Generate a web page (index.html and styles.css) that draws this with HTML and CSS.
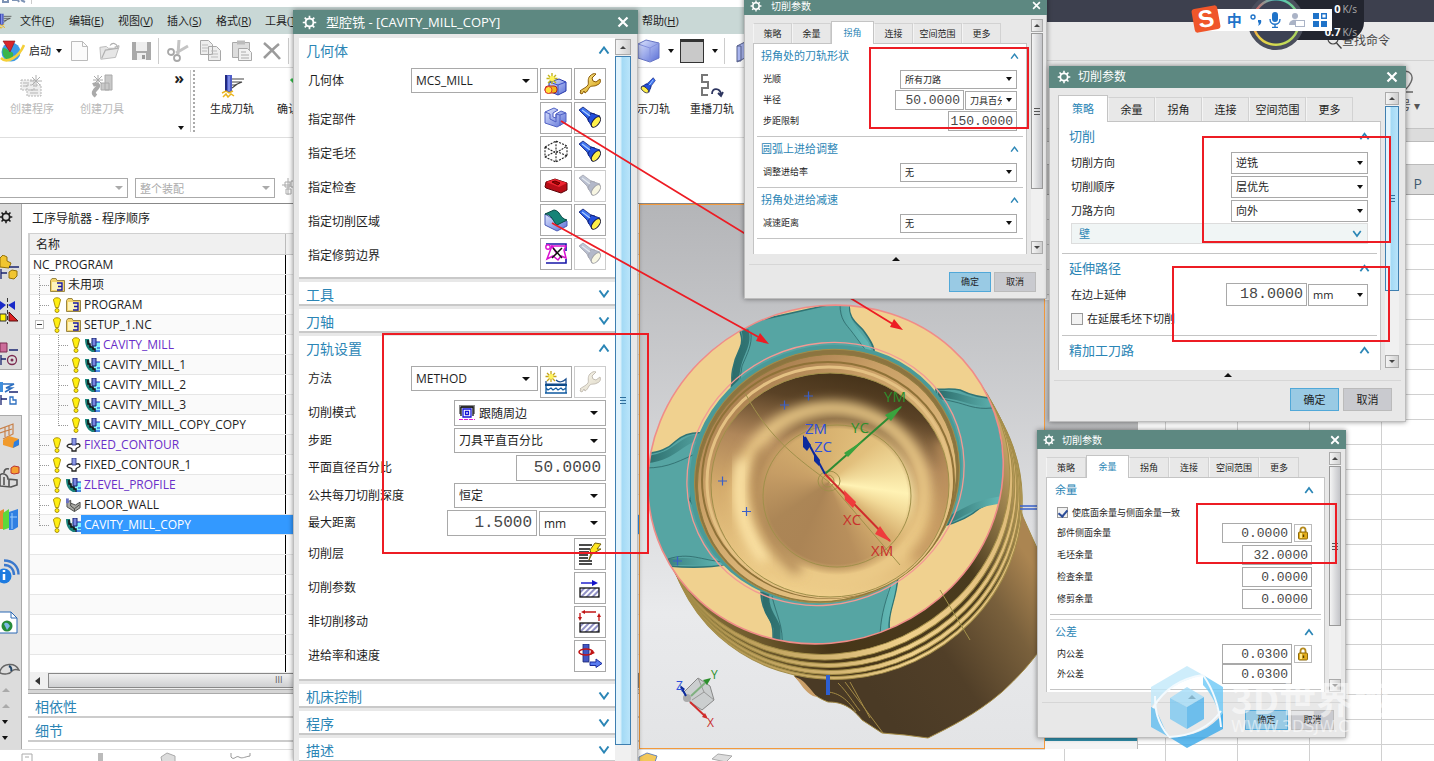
FILE: index.html
```html
<!DOCTYPE html>
<html lang="zh-CN">
<head>
<meta charset="utf-8">
<title>NX CAM</title>
<link rel="stylesheet" href="styles.css">
</head>
<body>
<svg class="defs" aria-hidden="true">
  <defs>
    <linearGradient id="blueBox" x1="0" y1="0" x2="1" y2="1"><stop offset="0" stop-color="#dfe6ff"/><stop offset="1" stop-color="#5a6fd6"/></linearGradient>
    <linearGradient id="torch" x1="0" y1="1" x2="1" y2="0"><stop offset="0" stop-color="#0a1f9c"/><stop offset=".5" stop-color="#2f66ee"/><stop offset="1" stop-color="#9cc6ff"/></linearGradient>
    <linearGradient id="gold" x1="0" y1="0" x2="1" y2="1"><stop offset="0" stop-color="#fff2a0"/><stop offset="1" stop-color="#d39a08"/></linearGradient>
    <pattern id="hatch" width="4" height="4" patternUnits="userSpaceOnUse" patternTransform="rotate(45)"><path d="M1 0v4" stroke="#22228c" stroke-width="1"/></pattern>
    <symbol id="gear" viewBox="0 0 16 16"><circle cx="8" cy="8" r="4.200" fill="none" stroke="currentColor" stroke-width="2"/><path d="M8 .8v3M8 12.200v3M.8 8h3M12.200 8h3M2.900 2.900l2.100 2.100M11 11l2.100 2.100M2.900 13.100L5 11M11 5l2.100-2.100" stroke="currentColor" stroke-width="1.800"/></symbol>
    <symbol id="close" viewBox="0 0 12 12"><path d="M1.500 1.500l9 9M10.500 1.500l-9 9" stroke="currentColor" stroke-width="2.200"/></symbol>
    <symbol id="up" viewBox="0 0 12 8"><path d="M1.500 7.500L6 1.500l4.500 6" fill="none" stroke="#2b86b6" stroke-width="2"/></symbol>
    <symbol id="down" viewBox="0 0 12 8"><path d="M1.500 .5L6 6.500l4.500-6" fill="none" stroke="#2b86b6" stroke-width="2"/></symbol>
    <symbol id="flash" viewBox="0 0 24 24"><path d="M1 4l4-3 8 6 4 1-6 8-2-4z" fill="url(#torch)" stroke="#0a1a70" stroke-width=".8"/><path d="M13 7l9 3-8 11-4-7z" fill="#2450dd" stroke="#0a1a70" stroke-width=".8"/><path d="M4 4l8 6" stroke="#a9ccff" stroke-width="1.400"/><ellipse cx="18" cy="16" rx="3.200" ry="6.200" transform="rotate(38 18 16)" fill="#fff04a" stroke="#113" stroke-width="1"/></symbol>
    <symbol id="wrench" viewBox="0 0 24 24"><path d="M2 19c2-2 6-3 8-6 1-2-1-6 2-9 2-2 4-3 6-2l-4 4 1 3 3 1 4-3c1 3 0 5-3 6-3 2-6 0-8 3-1 2-2 4-4 5l-1-2-2 3-2-1 1-2z" fill="url(#gold)" stroke="#8a5a06" stroke-width="1"/></symbol>
    <symbol id="excl" viewBox="0 0 10 16"><path d="M1.500 3C1.500 0 8.500 0 8.500 3L6.500 10.500h-3z" fill="#ffee10" stroke="#a58a00" stroke-width=".9"/><circle cx="5" cy="13.500" r="2" fill="#ffee10" stroke="#a58a00" stroke-width=".9"/></symbol>
    <symbol id="folder" viewBox="0 0 15 14"><path d="M.5 2.500l1.500-2h4l1 2h7.500v11H.5z" fill="#f3d36b" stroke="#9a8743"/><path d="M2 4h11v8H2z" fill="#fdf3bd"/><path d="M7 5h5v7H7M8 8.500h4" fill="none" stroke="#1a1aa0" stroke-width="1.400"/></symbol>
    <symbol id="cavity" viewBox="0 0 15 14"><path d="M6 4h9v10H9z" fill="#7ff4ff"/><path d="M0 1h4l1 6 4 3v4H7C2 12 0 7 0 1z" fill="#188078"/><path d="M3 2v4h2v3h3v2h2v3" fill="none" stroke="#111" stroke-width="1.500"/><path d="M7 0h4v8H7z" fill="#7785e0" stroke="#16206c" stroke-width="1"/><path d="M11 4h4M12 10h3M10 13h5" stroke="#1720c0"/></symbol>
    <symbol id="contour" viewBox="0 0 15 14"><path d="M1 8c2-3 3-1 4-2h6c2-1 3 1 3 2-1 2-3 1-4 3v2H6v-2c-1-2-5-1-5-3z" fill="#fff" stroke="#222" stroke-width="1.300"/><path d="M6 0h4v7H6z" fill="#8b98e6" stroke="#26307c" stroke-width=".8"/></symbol>
    <symbol id="floor" viewBox="0 0 16 14"><path d="M1 4l4-2v3l5 2 5-3v6l-6 4-8-5z" fill="#a9a9a4" stroke="#4a4a48"/><path d="M5 5v3l4 3 5-4M9 11v3" fill="none" stroke="#4a4a48"/><path d="M0 0h3v5H0z" fill="#6a72c4"/></symbol>
    <symbol id="lock" viewBox="0 0 12 14"><path d="M3.500 7V4c0-3.500 5-3.500 5 0v3" fill="none" stroke="#b58a1c" stroke-width="1.800"/><rect x="1.500" y="6" width="9" height="7" rx="1" fill="#e2ad1c" stroke="#8d6a0c"/><path d="M3 7h2v5H3z" fill="#ffe98a"/><path d="M6.500 8.500v2.500" stroke="#533c02" stroke-width="1.400"/></symbol>
    <symbol id="tool" viewBox="0 0 24 24"><path d="M5 1h7v17H5z" fill="#4f5ec9"/><path d="M5 1h2v17H5z" fill="#222a80"/><path d="M9 2v15" stroke="#aab6ff"/><path d="M12 5h12M12 8h10l-7 3M12 11h4l-4 3" fill="none" stroke="#444" stroke-width="1.100"/><path d="M2 19l4-2 3 2 4-2M3 23l3-3 2 3 3-3 3 2" fill="none" stroke="#eab520" stroke-width="1.500"/></symbol>
  </defs>
</svg>

<main class="desktop">
  <!-- spreadsheet behind -->
  <section class="sheet">
    <div class="sheet-top"></div>
    <div class="sheet-tabs"><svg width="16" height="16" viewBox="0 0 16 16"><circle cx="7" cy="6" r="5" fill="none" stroke="#444" stroke-width="1.200"/><path d="M10.500 10l5 5.500" stroke="#444" stroke-width="1.400"/></svg><span>查找命令</span></div>
    <div class="sheet-ribbon"><div class="ribbon-item"><svg width="14" height="26" viewBox="0 0 14 26"><path d="M0 2c8-3 12 4 9 10-2 5-5 7-8 10h10" fill="none" stroke="#666" stroke-width="1.400"/></svg><span>号 ▾</span></div></div>
    <div class="sheet-gap"></div>
    <div class="sheet-formula"></div>
    <div class="sheet-head">P</div>
    <div class="sheet-grid"></div>
  </section>
  <section class="back-window"></section>

  <!-- NX main window -->
  <section class="nx">
    <div class="nx-cap"><svg width="60" height="4" viewBox="0 0 60 4"><path d="M3 0v2h5V0M12 0h6l1 2M21 0l4 2" fill="none" stroke="#7d93b5" stroke-width="2"/><path d="M31.500 0v4" stroke="#ccc"/></svg></div>
    <nav class="menubar">
      <div class="bar-left"><svg width="14" height="16" viewBox="8 0 18 24"><use href="#tool" width="24" height="24"/></svg><a href="#">文件(<u>F</u>)</a><a href="#">编辑(<u>E</u>)</a><a href="#">视图(<u>V</u>)</a><a href="#">插入(<u>S</u>)</a><a href="#">格式(<u>R</u>)</a><a href="#">工具(<u>T</u>)</a></div>
      <div class="bar-right"><a href="#">帮助(<u>H</u>)</a></div>
    </nav>
    <div class="toolbar">
      <div class="bar-left tb1">
        <svg width="25" height="24" viewBox="0 0 25 24"><circle cx="11" cy="13" r="9.500" fill="#3c9be8"/><path d="M3 9c5 0 5 4 9 4 3 2 0 7-2 9-5-1-9-7-7-13z" fill="#3bb54a"/><path d="M1 19c6 6 18-1 23-13" fill="none" stroke="#f4cf3a" stroke-width="2.600"/><path d="M3 2l12 0-5 11z" fill="#d8262c" stroke="#8c1015" stroke-width=".6"/></svg>
        <span class="launch">启动</span><i class="caret"></i>
        <svg class="ic" width="17" height="20" viewBox="0 0 17 20"><path d="M.5.5h11l5 5v14H.5z" fill="#fbfbfb" stroke="#bbb"/><path d="M11.500.5v5h5" fill="none" stroke="#bbb"/></svg>
        <svg class="ic" width="22" height="20" viewBox="0 0 24 20"><path d="M1 6l7-1 2 2h9l3-2-4 12-16 2z" fill="#e6e6e6" stroke="#b8b8b8"/><path d="M3 18L7 9l14-2M12 4c3-4 7-2 8 1l2-1M20 5l-3 1" fill="none" stroke="#b0b0b0" stroke-width="1.300"/></svg>
        <svg class="ic" width="19" height="18" viewBox="0 0 19 18"><path d="M0 0h19v18H0z" fill="#a9a9a9"/><path d="M4 0h11v9H4zM5 11h9v7H5z" fill="#eee"/><path d="M10 13h3v4h-3z" fill="#999"/></svg>
        <i class="sep"></i>
        <svg class="ic" width="22" height="22" viewBox="0 0 22 22"><path d="M12 0l-1 14M21 6L9 13" stroke="#c4c4c4" stroke-width="3"/><circle cx="4" cy="12" r="3" fill="none" stroke="#a8a8a8" stroke-width="1.800"/><circle cx="10" cy="18" r="3" fill="none" stroke="#a8a8a8" stroke-width="1.800"/></svg>
        <svg class="ic" width="21" height="21" viewBox="0 0 21 21"><path d="M.5.5h8l4 4v10H.5zM8.500 6.500h8l4 4v10h-12z" fill="#eee" stroke="#a8a8a8"/><path d="M2 5h6M2 8h6M2 11h5M11 11h6M11 14h7M11 17h7" stroke="#bbb"/></svg>
        <svg class="ic" width="20" height="21" viewBox="0 0 20 21"><path d="M.5 2.500h17v15H.5z" fill="#ddd" stroke="#aaa"/><path d="M5 .5h8v4H5z" fill="#bbb"/><path d="M6.500 8.500h9l4 4v8h-13z" fill="#f2f2f2" stroke="#a8a8a8"/><path d="M9 12h5M9 15h8M9 18h8" stroke="#aaa"/></svg>
        <svg class="ic" width="18" height="18" viewBox="0 0 18 18"><path d="M1 1c5 4 11 10 16 16M16 2C11 6 6 11 1 16" stroke="#9b9b9b" stroke-width="2.600" fill="none"/></svg>
        <i class="sep"></i>
      </div>
      <div class="bar-right tb1r">
        <svg width="22" height="24" viewBox="0 0 22 24"><path d="M0 5l8-4 13 3v15l-9 4L0 19z" fill="url(#blueBox)" stroke="#6674c4"/><path d="M0 5l12 4 9-5M12 9v14" fill="none" stroke="#8390dd"/></svg><i class="caret"></i><i class="swatch"></i><i class="caret"></i><i class="sep"></i>
        <svg width="18" height="24" viewBox="0 0 18 24"><path d="M2 7l12-6v16L2 23zM2 7h4v15H2M14 13h4" fill="#aab6f0" stroke="#56608c"/></svg>
      </div>
    </div>
    <div class="toolbar tall">
      <div class="bar-left tb2">
        <div class="tool off"><svg width="24" height="24" viewBox="0 0 24 24"><path d="M1 6h13v10H1zM7 11h14v11H7z" fill="#eee" stroke="#b5b5b5" stroke-dasharray="2 1"/><path d="M10 16h8M10 19h8M3 9h6M3 12h4" stroke="#b5b5b5"/><path d="M16 1v12M10 7h12M12 3l8 8M20 3l-8 8" stroke="#b0b0b0"/></svg><span>创建程序</span></div>
        <div class="tool off"><svg width="24" height="24" viewBox="0 0 24 24"><path d="M15 1h7v15h-7zM11 9h8v7h-8z" fill="#c9c9c9" stroke="#aaa"/><path d="M3 11c4-2 7 0 4 3s-5 5-1 8" fill="none" stroke="#aaa" stroke-width="4"/><path d="M8 1v10M3 6h10M4 2l8 8M12 2L4 10" stroke="#aaa"/></svg><span>创建刀具</span></div>
        <div class="more"><b>»</b><i class="caret"></i></div>
        <i class="grip"></i>
        <div class="tool gen"><svg width="24" height="24"><use href="#tool"/></svg><span>生成刀轨</span></div>
        <div class="tool"><svg width="24" height="24" viewBox="0 0 24 24"><path d="M4 5l4 4 9-8" stroke="#35c04b" stroke-width="3" fill="none"/></svg><span>确认刀轨</span></div>
      </div>
      <div class="bar-right tb2r">
        <div class="tool"><svg width="24" height="24" viewBox="0 0 24 24"><g transform="translate(20 3) rotate(90) scale(.7)"><use href="#flash" width="24" height="24"/></g></svg><span>显示刀轨</span></div>
        <div class="tool"><svg width="24" height="24" viewBox="0 0 24 24"><path d="M8 1H2v7h6v6H2v7h6" fill="none" stroke="#777" stroke-width="2"/><path d="M12 20c0-7 8-6 9 0m-3-1l3 3 2-4" fill="none" stroke="#2e3660" stroke-width="1.800"/></svg><span>重播刀轨</span></div>
      </div>
    </div>
    <div class="selbar">
      <label class="drop off"><select aria-label="过滤器"><option></option></select></label>
      <label class="drop off"><select aria-label="选择范围"><option>整个装配</option></select></label>
      <svg width="18" height="18" viewBox="0 0 18 18"><path d="M3 4h5v5H3zM9 3h6v6H9zM4 11h5v5H4zM6 0v17M0 7h8" fill="none" stroke="#aaa"/></svg>
    </div>
    <div class="work">
      <aside class="rail">
        <div class="rail-a">
          <svg width="14" height="14"><use href="#gear"/></svg>
          <svg width="20" height="26" viewBox="0 0 20 26"><path d="M0 3l3-3 4 2v4l4 2-2 5-9-1z" fill="#f1c531" stroke="#92700a"/><path d="M9 17l3-2 5 1v5l-3 3-5-1z" fill="#f1c531" stroke="#92700a"/><path d="M1 14v10M1 18h6M9 12h10" stroke="#1a2470" stroke-width="1.300"/></svg>
          <svg width="20" height="26" viewBox="0 0 20 26"><path d="M0 3l6 4-6 5zM15 3L8 7l7 5z" fill="#1a2ac8"/><path d="M0 16h6v7H0z" fill="#fff200" stroke="#333"/><path d="M9 14l9 9H9z" fill="#d22" stroke="#511"/><path d="M7.500 0v26" stroke="#333" stroke-dasharray="4 2"/></svg>
          <svg width="20" height="26" viewBox="0 0 20 26"><path d="M0 2h7v9H0z" fill="#cc6c9a" stroke="#7c2a50"/><circle cx="12" cy="19" r="4.500" fill="none" stroke="#7c2a50" stroke-width="1.300"/><circle cx="12" cy="19" r="1.500" fill="#7c2a50"/><path d="M1 14v10M1 18h5M9 9h9" stroke="#1a2470" stroke-width="1.300"/></svg>
        </div>
        <div class="rail-now"><svg width="20" height="26" viewBox="0 0 20 26"><path d="M0 2h3v10H0z" fill="#3f8edc"/><path d="M3 4h11L6 8h6l-7 4" fill="none" stroke="#2d6fc0" stroke-width="1.500"/><path d="M1 15v10M1 19h6M9 12h9" stroke="#1a2470" stroke-width="1.300"/><path d="M10 17v7h6v-4h-3v-3z" fill="none" stroke="#2d6fc0" stroke-width="1.300"/></svg></div>
        <div class="rail-b">
          <svg width="20" height="26" viewBox="0 0 20 26"><path d="M0 6L13 1v10L3 16M0 10l12-4M5 4v10M9 3v9" fill="none" stroke="#c8814a" stroke-width="1.200"/><path d="M3 17l6-4 10 3v6l-6 3-10-3z" fill="#f09a2c"/><path d="M14 19l5-3v6l-6 3z" fill="#2d7fe0"/></svg>
          <svg width="20" height="26" viewBox="0 0 20 26"><path d="M11 3l3-2 5 1v6l-5 1-3-1z" fill="#f5a030" stroke="#b33"/><path d="M9 4c-4-1-5 2-5 4M0 10c3-3 8 0 8 4l9 1v5l-6 2-11-1zM4 12v8M9 15v7" fill="none" stroke="#555" stroke-width="1.600"/></svg>
          <svg width="20" height="26" viewBox="0 0 20 26"><path d="M0 4l4-2v20H0z" fill="#e58a30"/><path d="M3 6l6-4v19l-6 2z" fill="#5cd83a"/><path d="M9 5l9-3v18l-5 3H9z" fill="#2f7fe2"/><path d="M12 6v16M10 10h7" stroke="#9fd0ff"/></svg>
          <svg width="20" height="26" viewBox="0 0 20 26"><circle cx="4" cy="17" r="7.500" fill="#1d7be0"/><path d="M4 15v6M4 11v2" stroke="#fff" stroke-width="2.500"/><path d="M4 6c6 0 10 4 10 10M4 1.500c9 0 14.500 6 14.500 14" fill="none" stroke="#3a78cc" stroke-width="2.400"/></svg>
          <svg width="20" height="26" viewBox="0 0 20 26"><path d="M-2 1h13l6 6v15H-2z" fill="#fff" stroke="#2a68b4"/><path d="M11 1v6h6" fill="none" stroke="#2a68b4"/><circle cx="7" cy="15" r="5.500" fill="#278b3a"/><path d="M4 13c2-3 5 0 6 2l-3 4z" fill="#7fb9e8"/></svg>
          <svg width="20" height="14" viewBox="0 0 20 14"><path d="M0 8c3-8 15-9 19-1-3-1-5-1-7 1-2 3-8 4-12 2z" fill="#ddd" stroke="#666" stroke-width="1.400"/><path d="M9 3c2 1 3 3 2 5" stroke="#246" stroke-width="2" fill="none"/></svg>
          <div class="rail-ar"><i class="c-up"></i><i class="c-up"></i><i class="caret"></i><i class="caret bar"></i></div>
        </div>
      </aside>
      <section class="navigator">
        <h2>工序导航器 - 程序顺序</h2>
        <div class="tree">
          <div class="tree-head"><span>名称</span><span></span></div>
          <ul>
            <li class="root">NC_PROGRAM</li>
            <li><i class="g h first"></i><svg class="fi" width="15" height="14"><use href="#folder"/></svg>未用项</li>
            <li><i class="g h"></i><svg class="ex" width="10" height="16"><use href="#excl"/></svg><svg class="fi" width="15" height="14"><use href="#folder"/></svg>PROGRAM</li>
            <li><button class="fold" aria-label="折叠"></button><svg class="ex" width="10" height="16"><use href="#excl"/></svg><svg class="fi" width="15" height="14"><use href="#folder"/></svg>SETUP_1.NC</li>
            <li class="vis"><i class="g"></i><i class="g h"></i><svg class="ex" width="10" height="16"><use href="#excl"/></svg><svg class="fi" width="15" height="14"><use href="#cavity"/></svg>CAVITY_MILL</li>
            <li><i class="g"></i><i class="g h"></i><svg class="ex" width="10" height="16"><use href="#excl"/></svg><svg class="fi" width="15" height="14"><use href="#cavity"/></svg>CAVITY_MILL_1</li>
            <li><i class="g"></i><i class="g h"></i><svg class="ex" width="10" height="16"><use href="#excl"/></svg><svg class="fi" width="15" height="14"><use href="#cavity"/></svg>CAVITY_MILL_2</li>
            <li><i class="g"></i><i class="g h"></i><svg class="ex" width="10" height="16"><use href="#excl"/></svg><svg class="fi" width="15" height="14"><use href="#cavity"/></svg>CAVITY_MILL_3</li>
            <li><i class="g"></i><i class="g h last"></i><svg class="ex" width="10" height="16"><use href="#excl"/></svg><svg class="fi" width="15" height="14"><use href="#cavity"/></svg>CAVITY_MILL_COPY_COPY</li>
            <li class="vis"><i class="g h"></i><svg class="ex" width="10" height="16"><use href="#excl"/></svg><svg class="fi" width="15" height="14"><use href="#contour"/></svg>FIXED_CONTOUR</li>
            <li><i class="g h"></i><svg class="ex" width="10" height="16"><use href="#excl"/></svg><svg class="fi" width="15" height="14"><use href="#contour"/></svg>FIXED_CONTOUR_1</li>
            <li class="vis"><i class="g h"></i><svg class="ex" width="10" height="16"><use href="#excl"/></svg><svg class="fi" width="15" height="14"><use href="#cavity"/></svg>ZLEVEL_PROFILE</li>
            <li><i class="g h"></i><svg class="ex" width="10" height="16"><use href="#excl"/></svg><svg class="fi" width="15" height="14"><use href="#floor"/></svg>FLOOR_WALL</li>
            <li><i class="g h last"></i><svg class="ex" width="10" height="16"><use href="#excl"/></svg><svg class="fi" width="15" height="14"><use href="#cavity"/></svg><b class="picked">CAVITY_MILL_COPY</b></li>
            <li></li><li></li><li></li><li></li><li></li><li></li><li></li>
          </ul>
          <div class="hscroll"><i class="c-left"></i><div class="hthumb">III</div></div>
        </div>
        <div class="splitter"></div>
        <h3>相依性</h3>
        <h3>细节</h3>
      </section>
      <div class="scene">
<svg class="model" viewBox="640 205 405 543" preserveAspectRatio="xMinYMin slice" role="img" aria-label="活塞模型">
  <defs>
    <linearGradient id="bodyG" gradientUnits="userSpaceOnUse" x1="870" y1="690" x2="1040" y2="575"><stop offset="0" stop-color="#4a3a25"/><stop offset=".4" stop-color="#513f28"/><stop offset=".75" stop-color="#79603c"/><stop offset="1" stop-color="#ab8551"/></linearGradient>
    <linearGradient id="ringD" x1="0" y1="0" x2="1" y2="0"><stop offset="0" stop-color="#8a743c"/><stop offset=".3" stop-color="#473618"/><stop offset=".75" stop-color="#4a3b1e"/><stop offset="1" stop-color="#c9a868"/></linearGradient>
    <linearGradient id="ringL" x1="0" y1="0" x2="1" y2="0"><stop offset="0" stop-color="#b0934f"/><stop offset=".5" stop-color="#efd08c"/><stop offset="1" stop-color="#dcb877"/></linearGradient>
    <linearGradient id="wallG" x1=".6" y1="0" x2=".4" y2="1"><stop offset="0" stop-color="#453219"/><stop offset=".15" stop-color="#5a4226"/><stop offset=".36" stop-color="#b0875a"/><stop offset=".6" stop-color="#d4ab6c"/><stop offset="1" stop-color="#f0d08c"/></linearGradient>
    <linearGradient id="lipG" x1=".4" y1="0" x2=".6" y2="1"><stop offset="0" stop-color="#a87e4f"/><stop offset=".25" stop-color="#c99f66"/><stop offset="1" stop-color="#ebc987"/></linearGradient>
    <linearGradient id="tealE" x1="0" y1="0" x2="1" y2="0"><stop offset="0" stop-color="#2c6d6c"/><stop offset="1" stop-color="#62b8b5"/></linearGradient>
    <filter id="b4" x="-30%" y="-30%" width="160%" height="160%"><feGaussianBlur stdDeviation="6"/></filter>
    <clipPath id="face"><ellipse rx="180" ry="167" transform="translate(825.500 474.500) rotate(-25)"/></clipPath>
    <clipPath id="bowl"><ellipse cx="830" cy="485" rx="119" ry="112"/></clipPath>
    <ellipse id="rim" rx="180" ry="167" transform="rotate(-25)"/>
  </defs>
  <path d="M1000 440L1023 517L1032 537L1037 548L1046 562V640C1035 660 1015 680 1002 692C975 715 950 727 928 738L905 735L882 733L862 720C850 705 840 702 828 702C815 697 808 690 795 677L760 600z" fill="url(#bodyG)" stroke="#a38a45"/>
  <path d="M795 677c8 2 12 8 22 20l-4-1c-8-4-12-12-18-19z" fill="#c99e68"/>
  <path d="M838 683c10 10 14 18 22 28M845 682l38 51M826 692c10 0 20 5 30 20M850 682l20 36" fill="none" stroke="#a38a45"/>
  <g stroke="#a38d49" stroke-width="1">
    <use href="#rim" transform="translate(844.500 510)" fill="url(#ringL)"/>
    <use href="#rim" transform="translate(843.500 507)" fill="url(#ringD)"/>
    <use href="#rim" transform="translate(842 505)" fill="url(#ringL)"/>
    <use href="#rim" transform="translate(840.500 501)" fill="url(#ringD)"/>
    <use href="#rim" transform="translate(839 498)" fill="url(#ringL)"/>
    <use href="#rim" transform="translate(837 494)" fill="url(#ringD)"/>
    <use href="#rim" transform="translate(835 490.500)" fill="url(#ringL)"/>
    <use href="#rim" transform="translate(832 485)" fill="url(#ringD)"/>
  </g>
  <use href="#rim" transform="translate(825.500 474.500)" fill="#f0d18f"/>
  <g clip-path="url(#face)">
    <g fill="#56a5a3" stroke="#2f7475" stroke-width="1.500">
      <path d="M738 325L850 300C846 318 858 324 863 330C872 342 876 350 874 357L820 370L735 389C728 380 734 360 740 348C744 340 740 332 738 325z"/>
      <path d="M995 398C978 398 968 394 960 390C950 388 942 390 936 389C934 400 960 440 960 470L943 526C960 522 972 515 980 508C990 503 995 502 1010 500z"/>
      <path d="M761 592C761 605 766 614 770 620C774 626 773 636 773 650H892C884 610 895 610 898 577L830 600z"/>
      <path d="M704 433C694 432 684 434 676 441C668 449 660 452 645 454V566H668C690 568 710 568 727 564L690 500z"/>
    </g>
    <g fill="none" stroke="url(#tealE)" stroke-width="7">
      <path d="M745 330C749 345 740 352 737 368L734 388M846 304C842 320 858 334 865 344L870 356"/>
      <path d="M990 403C970 404 960 394 938 394M944 522C960 515 975 503 1000 500"/>
      <path d="M766 592C764 610 774 618 777 628L777 650M893 580C892 600 884 610 884 632"/>
      <path d="M706 437C680 436 680 456 645 460M665 563C680 559 700 564 724 561"/>
    </g>
    <g fill="none" stroke="#2c6768" stroke-width=".8"><path d="M751 333C752 345 748 352 742 366L739 385M840 304C840 320 846 324 852 332L867 352M992 408C975 410 965 404 955 402L938 398M782 650C784 625 776 615 772 596M880 640C880 620 884 605 891 585M700 452C680 460 670 468 645 468M668 559C690 552 700 560 724 562"/></g>
  </g>
  <use href="#rim" transform="translate(825.500 474.500)" fill="none" stroke="#f08c88" stroke-width="1.600"/>
  <ellipse rx="138" ry="127" transform="translate(825.500 474) rotate(-25)" fill="#4a9a98"/>
  <ellipse rx="140.500" ry="129.500" transform="translate(825.500 474) rotate(-25)" fill="none" stroke="#f39a94" stroke-width="1.300"/>
  <ellipse rx="134" ry="125" transform="translate(827 476) rotate(-25)" fill="#8c7440" stroke="#a38d49"/>
  <ellipse rx="131" ry="122" transform="translate(827 478) rotate(-25)" fill="url(#lipG)" stroke="#8f7a3e"/>
  <ellipse cx="828" cy="480" rx="126" ry="118" fill="none" stroke="#8f7238" stroke-width="2"/>
  <ellipse cx="829" cy="482" rx="122" ry="115" fill="none" stroke="#e4c183" stroke-width="3"/>
  <g clip-path="url(#bowl)">
    <ellipse cx="830" cy="485" rx="119" ry="112" fill="url(#wallG)"/>
    <ellipse cx="832" cy="494" rx="92" ry="86" fill="none" stroke="#eccb88" stroke-width="14" filter="url(#b4)"/>
    <path d="M742 460C735 500 745 535 765 560" fill="none" stroke="#ffe9ad" stroke-width="10" filter="url(#b4)"/>
    <path d="M940 440C955 480 948 530 915 560" fill="none" stroke="#c0935d" stroke-width="10" filter="url(#b4)"/>
    <path d="M765 450C748 500 765 545 800 570" fill="none" stroke="#b08857" stroke-width="12" filter="url(#b4)"/>
    <foreignObject x="755" y="418" width="164" height="157"><div class="cone"></div></foreignObject>
  </g>
  <g fill="none" stroke="#a0904a"><ellipse cx="830" cy="485" rx="119" ry="112"/><ellipse cx="837" cy="496" rx="74" ry="71"/><path d="M745 393C770 440 800 460 829 482L900 565M940 590l30 50"/><ellipse cx="829" cy="481" rx="11" ry="10"/><circle cx="828" cy="481" r="6"/></g>
  <path d="M780 405h9M784.500 400.500v9M804 396h9M808.500 391.500v9M718 481h9M722.500 476.500v9M742 511.500h9M746.500 507v9M673 561h9M677.500 556.500v9" stroke="#3a5fc8" stroke-width="1.200"/>
  <path d="M828 675v20" stroke="#2d5fd2" stroke-width="4"/><path d="M1020 506h25M1020 509h25" stroke="#3a62cc" stroke-width="1.600"/>
  <g stroke-width="2"><path d="M825 474L901 407" stroke="#2c8b33"/><path d="M902 406l-11 15-6-6zM864 440l-16 17-4-4z" fill="#3aa33e"/><path d="M825 474L805 437" stroke="#0c2a9c"/><path d="M803 435l8 10-4 6-4-4zM814 452l6 8-1 6-5-5z" fill="#0c2a9c"/><path d="M825 474L890 541" stroke="#d02c2c"/><path d="M891 542l-16-8 5-8zM844 490l12 12-3 6-8-8z" fill="#ef3c3c"/></g>
  <g class="axis"><text x="884" y="402" fill="#2d8f2d">YM</text><text x="851" y="433" fill="#2d8f2d">YC</text><text x="805" y="434" fill="#2d50dc">ZM</text><text x="814" y="452" fill="#2d50dc">ZC</text><text x="843" y="525" fill="#c9302c">XC</text><text x="871" y="556" fill="#c9302c">XM</text></g>
  <g><path d="M684 692l14-14 12 8 4 14-12 10-12-8z" fill="#c4c8c8" fill-opacity=".8" stroke="#888"/><path d="M698 678l6 14 10 8M704 692l-12 8" fill="none" stroke="#999"/><circle cx="687" cy="698" r="4" fill="#aaa"/><path d="M691 696l14-13" stroke="#7fb07f" stroke-width="2"/><path d="M711 678l-8 2 4 5z" fill="#2d8f2d"/><path d="M686 696l-5-9" stroke="#0c2a9c" stroke-width="2"/><path d="M680 685l5 4-3 3z" fill="#0c2a9c"/><path d="M690 702l16 15" stroke="#d02c2c" stroke-width="2"/><path d="M708 719l-6-2 3-4z" fill="#d02c2c"/></g>
  <g class="axis small"><text x="676" y="690" fill="#2d50dc">Z</text><text x="711" y="679" fill="#2d8f2d">Y</text><text x="707" y="727" fill="#c9302c">X</text></g>
</svg>
      </div>
    </div>
    <div class="nx-foot"><div class="bar-left"><svg width="260" height="12" viewBox="0 0 260 12"><path d="M10 4h10v9H10zM13 7h4" fill="none" stroke="#aaa"/><path d="M86 3h5v9h-5z" fill="#bbb"/><path d="M149 7l6-4 8 3v6h-13z" fill="#ddd" stroke="#aaa"/><path d="M219 3v4c3 4 5-2 8 0s5 0 11-1V3M219 12h20" fill="none" stroke="#999"/></svg></div><div class="bar-right"><svg width="120" height="12" viewBox="0 0 120 12"><path d="M1 7l8-4 10 3-2 6H1z" fill="#f3c85a" stroke="#6b86b8"/><path d="M74 9l6-5 14 2-6 6z" fill="#ddd" stroke="#aaa"/></svg></div></div>
  </section>

  <!-- operation dialog -->
  <form class="win op">
    <header><svg width="15" height="15"><use href="#gear"/></svg><h1>型腔铣 - [CAVITY_MILL_COPY]</h1><button type="button" aria-label="关闭"><svg width="12" height="12"><use href="#close"/></svg></button></header>
    <div class="op-body">
      <div class="op-list">
        <section>
          <h2>几何体<svg width="12" height="8"><use href="#up"/></svg></h2>
          <div class="row b"><label for="geo">几何体</label><span class="drop w127"><select id="geo"><option>MCS_MILL</option></select></span><button type="button" aria-label="新建几何体"><svg width="24" height="24" viewBox="0 0 24 24"><path d="M5 10l10-3 7 3v9l-8 4-9-4z" fill="url(#blueBox)" stroke="#2336a8"/><path d="M5 10l9 3 8-3M14 13v10" fill="none" stroke="#3c50c8"/><rect x="1" y="14" width="12" height="7" rx="3" fill="#f2b51b" stroke="#b3261e"/><circle cx="4.500" cy="18" r="3.500" fill="#ffe23b" stroke="#d33"/><path d="M8 1v11M2.500 6.500h11M4 3l8 8M12 3l-8 8" stroke="#c4b41a" stroke-width="1.400"/><circle cx="8" cy="6.500" r="2.500" fill="#fff45c"/></svg></button><button type="button" aria-label="编辑"><svg width="24" height="24"><use href="#wrench"/></svg></button></div>
          <div class="row b"><span>指定部件</span><button type="button" aria-label="选择部件"><svg width="24" height="24" viewBox="0 0 24 24"><path d="M1 6l9-4 4 2-5 3v4l3 1V8l5-3 5 2v9l-9 5-12-4z" fill="url(#blueBox)" stroke="#5061c4"/><path d="M1 6l5 2v5l6 3V8l4 1 6-2M16 9v11" fill="none" stroke="#5061c4"/></svg></button><button type="button" aria-label="显示"><svg width="24" height="24"><use href="#flash"/></svg></button></div>
          <div class="row b"><span>指定毛坯</span><button type="button" aria-label="选择毛坯"><svg width="24" height="24" viewBox="0 0 24 24"><path d="M1 7l11-6 11 5v10l-11 6L1 17zM1 7l11 6 11-7M12 13v9M12 1v10M1 17l11-6 11 5" fill="none" stroke="#222" stroke-width="1.100" stroke-dasharray="2 1.200"/></svg></button><button type="button" aria-label="显示"><svg width="24" height="24"><use href="#flash"/></svg></button></div>
          <div class="row b"><span>指定检查</span><button type="button" aria-label="选择检查"><svg width="24" height="24" viewBox="0 0 24 24"><path d="M1 13l1-5 9-3 12 4v7l-6 3-15-5z" fill="#b80e18" stroke="#5c0408"/><path d="M2 8l9-3 12 4-8 4z" fill="#ee2430"/><path d="M8 8l3-1 5 2-2 2z" fill="#a00" stroke="#600"/></svg></button><button type="button" disabled aria-label="显示"><svg width="24" height="24"><use href="#flash"/></svg></button></div>
          <div class="row b"><span>指定切削区域</span><button type="button" aria-label="选择切削区域"><svg width="24" height="24" viewBox="0 0 24 24"><path d="M1 6v11l12 6 10-5v-5l-9 1z" fill="url(#blueBox)" stroke="#4b5cb8"/><path d="M1 6l9-4c7 1 5 8 13 10l-10 5C9 14 8 6 1 6z" fill="#158377" stroke="#064a44"/></svg></button><button type="button" aria-label="显示"><svg width="24" height="24"><use href="#flash"/></svg></button></div>
          <div class="row b"><span>指定修剪边界</span><button type="button" aria-label="选择修剪边界"><svg width="24" height="24" viewBox="0 0 24 24"><path d="M2 2h20v7M2 21h20v-4" fill="none" stroke="#1717a8" stroke-width="1.600"/><circle cx="4" cy="5" r="2.200" fill="none" stroke="#d810d0" stroke-width="1.400"/><path d="M7 4h15l-2 4 2 8-5-2-3 4-5-4-6 3 3-8 2-5 5 8" fill="none" stroke="#d810d0" stroke-width="1.500"/><path d="M9 6l9 10M18 6L8 16" stroke="#111" stroke-width="1.500"/></svg></button><button type="button" disabled aria-label="显示"><svg width="24" height="24"><use href="#flash"/></svg></button></div>
        </section>
        <section class="shut"><h2>工具<svg width="12" height="8"><use href="#down"/></svg></h2></section>
        <section class="shut"><h2>刀轴<svg width="12" height="8"><use href="#down"/></svg></h2></section>
        <section class="path">
          <h2>刀轨设置<svg width="12" height="8"><use href="#up"/></svg></h2>
          <div class="row b"><label for="meth">方法</label><span class="drop w127"><select id="meth"><option>METHOD</option></select></span><button type="button" aria-label="新建方法"><svg width="24" height="24" viewBox="0 0 24 24"><path d="M1 10c3 4 5 3 8 0 4 4 9 3 14-1v14H1z" fill="#fff"/><path d="M12 10c3 3 7 2 10-1v5H2v-3" fill="none" stroke="#134a8c" stroke-width="1.200"/><path d="M1 15h22" stroke="#0f4a88" stroke-width="2"/><path d="M2 18l2 2 3-2 2 2 3-2 2 2 3-2 2 2 3-2M1 23h22M2 15v8M22 15v8" fill="none" stroke="#0f5aa0" stroke-width="1.300"/><path d="M7 1v11M1.500 6.500h11M3 3l8 8M11 3l-8 8" stroke="#c4a41a" stroke-width="1.300"/><circle cx="7" cy="6.500" r="2.500" fill="#fff45c"/></svg></button><button type="button" disabled aria-label="编辑"><svg width="24" height="24"><use href="#wrench"/></svg></button></div>
          <div class="row tallsel"><label for="mode">切削模式</label><span class="drop w152 pic"><svg width="16" height="16" viewBox="0 0 16 16"><path d="M0 0h16v9h-2V3H2v6H0z" fill="#888"/><path d="M2 2h12v9M2 2v9" fill="none" stroke="#111" stroke-width="1.300"/><path d="M4 4h8v8H4zM6.500 6.500h3v3h-3z" fill="none" stroke="#1414d8" stroke-width="1.300"/><path d="M0 14.500h16" stroke="#d818d0" stroke-dasharray="4 1"/></svg><select id="mode"><option>跟随周边</option></select></span></div>
          <div class="row"><label for="step">步距</label><span class="drop w152"><select id="step"><option>刀具平直百分比</option></select></span></div>
          <div class="row"><label for="pct">平面直径百分比</label><input id="pct" value="50.0000"></div>
          <div class="row"><label for="depth">公共每刀切削深度</label><span class="drop w152"><select id="depth"><option>恒定</option></select></span></div>
          <div class="row"><label for="maxd">最大距离</label><input id="maxd" value="1.5000"><span class="drop w67"><select aria-label="单位"><option>mm</option></select></span></div>
          <div class="row b"><span>切削层</span><button type="button" aria-label="切削层"><svg width="24" height="24" viewBox="0 0 24 24"><path d="M1 3h13M1 7h11M1 10h10M1 13h9M1 16h9M1 19h13M1 22h13" stroke="#111" stroke-width="1.600"/><path d="M17 1l6 1-4 5h4l-9 5-3 6 2-7-1-3z" fill="#ffe61f" stroke="#75620a"/></svg></button></div>
          <div class="row b"><span>切削参数</span><button type="button" aria-label="切削参数"><svg width="24" height="24" viewBox="0 0 24 24"><path d="M3 7h13" stroke="#1414c8" stroke-width="1.400"/><path d="M14 4l6 3-6 3z" fill="#1414c8"/><rect x="2" y="12" width="19" height="9" fill="url(#hatch)" stroke="#111" stroke-width="1.300"/></svg></button></div>
          <div class="row b"><span>非切削移动</span><button type="button" aria-label="非切削移动"><svg width="24" height="24" viewBox="0 0 24 24"><path d="M6 2h12M2 3v5M21 5v6" stroke="#c01414" stroke-width="1.300"/><path d="M3 2l4-2v4zM2 11L0 7h4zM21 3l-2 4h4z" fill="#c01414"/><rect x="2" y="13" width="19" height="9" fill="url(#hatch)" stroke="#111" stroke-width="1.300"/></svg></button></div>
          <div class="row b"><span>进给率和速度</span><button type="button" aria-label="进给率和速度"><svg width="24" height="24" viewBox="0 0 24 24"><path d="M5 0h6v18H5z" fill="#4356c4" stroke="#1b2670" stroke-width=".8"/><ellipse cx="8" cy="8" rx="7" ry="3" fill="none" stroke="#c01414" stroke-width="1.600"/><path d="M13 6l4 3-5 2z" fill="#c01414"/><path d="M12 18h6v-3l6 4.500-6 4v-2h-6z" fill="#5a7cf0" stroke="#1a2da0"/></svg></button></div>
        </section>
        <section class="shut"><h2>机床控制<svg width="12" height="8"><use href="#down"/></svg></h2></section>
        <section class="shut"><h2>程序<svg width="12" height="8"><use href="#down"/></svg></h2></section>
        <section class="shut"><h2>描述<svg width="12" height="8"><use href="#down"/></svg></h2></section>
      </div>
      <div class="vs"><i class="vb up"></i><i class="vt blue"></i><i class="vrest"></i></div>
    </div>
  </form>

  <svg class="marks arrows" width="1434" height="761" aria-hidden="true"><g stroke="#ed1c24" stroke-width="1.800"><path d="M561 121L896 326M552 223L762 339"/></g><path d="M903 330l-13-3 4-8zM769 344l-13-3 4-8z" fill="#ed1c24"/></svg>

  <!-- corner settings -->
  <form class="win cut d2">
    <header><svg width="12" height="12"><use href="#gear"/></svg><h1>切削参数</h1><button type="button" aria-label="关闭"><svg width="9" height="9"><use href="#close"/></svg></button></header>
    <div class="cut-body">
      <div class="cut-main">
        <nav><button type="button">策略</button><button type="button">余量</button><button type="button" class="on">拐角</button><button type="button">连接</button><button type="button" class="wide">空间范围</button><button type="button">更多</button></nav>
        <div class="panel">
          <section><h2>拐角处的刀轨形状<svg width="9" height="8"><use href="#up"/></svg></h2>
            <div class="row"><label for="sm">光顺</label><span class="drop lg"><select id="sm"><option>所有刀路</option></select></span></div>
            <div class="row"><label for="ra">半径</label><input id="ra" value="50.0000"><span class="drop sm"><select aria-label="半径单位"><option>刀具百分比</option></select></span></div>
            <div class="row"><label for="lim">步距限制</label><input id="lim" value="150.0000"></div></section>
          <section><h2>圆弧上进给调整<svg width="9" height="8"><use href="#up"/></svg></h2>
            <div class="row"><label for="adj">调整进给率</label><span class="drop lg"><select id="adj"><option>无</option></select></span></div></section>
          <section><h2>拐角处进给减速<svg width="9" height="8"><use href="#up"/></svg></h2>
            <div class="row"><label for="slow">减速距离</label><span class="drop lg"><select id="slow"><option>无</option></select></span></div></section>
        </div>
      </div>
      <div class="vs"><i class="vb up"></i><i class="vt"></i><i class="vrest"></i><i class="vb dn"></i></div>
    </div>
    <div class="fold-line"><i class="c-up"></i></div>
    <footer><button type="button" class="ok">确定</button><button type="button">取消</button></footer>
  </form>

  <!-- strategy -->
  <form class="win cut d3">
    <header><svg width="14" height="14"><use href="#gear"/></svg><h1>切削参数</h1><button type="button" aria-label="关闭"><svg width="12" height="12"><use href="#close"/></svg></button></header>
    <div class="cut-body">
      <div class="cut-main">
        <nav><button type="button" class="on">策略</button><button type="button">余量</button><button type="button">拐角</button><button type="button">连接</button><button type="button" class="wide">空间范围</button><button type="button">更多</button></nav>
        <div class="panel">
          <section><h2>切削<svg width="11" height="8"><use href="#up"/></svg></h2>
            <div class="row"><label for="dir">切削方向</label><span class="drop lg"><select id="dir"><option>逆铣</option></select></span></div>
            <div class="row"><label for="ord">切削顺序</label><span class="drop lg"><select id="ord"><option>层优先</option></select></span></div>
            <div class="row"><label for="pdir">刀路方向</label><span class="drop lg"><select id="pdir"><option>向外</option></select></span></div>
            <h4>壁<svg width="10" height="8"><use href="#down"/></svg></h4></section>
          <section><h2>延伸路径<svg width="11" height="8"><use href="#up"/></svg></h2>
            <div class="row"><label for="ext">在边上延伸</label><input id="ext" value="18.0000"><span class="drop sm"><select aria-label="延伸单位"><option>mm</option></select></span></div>
            <label class="check"><input type="checkbox">在延展毛坯下切削</label></section>
          <section><h2>精加工刀路<svg width="11" height="8"><use href="#up"/></svg></h2>
            <label class="check"><input type="checkbox">添加精加工刀路</label></section>
        </div>
      </div>
      <div class="vs"><i class="vb up"></i><i class="vt blue"></i><i class="vrest"></i><i class="vb dn"></i></div>
    </div>
    <div class="fold-line"><i class="c-up"></i></div>
    <footer><button type="button" class="ok">确定</button><button type="button">取消</button></footer>
  </form>

  <!-- stock -->
  <form class="win cut d4">
    <header><svg width="12" height="12"><use href="#gear"/></svg><h1>切削参数</h1><button type="button" aria-label="关闭"><svg width="10" height="10"><use href="#close"/></svg></button></header>
    <div class="cut-body">
      <div class="cut-main">
        <nav><button type="button">策略</button><button type="button" class="on">余量</button><button type="button">拐角</button><button type="button">连接</button><button type="button" class="wide">空间范围</button><button type="button">更多</button></nav>
        <div class="panel">
          <section><h2>余量<svg width="10" height="8"><use href="#up"/></svg></h2>
            <label class="check"><input type="checkbox" checked>使底面余量与侧面余量一致</label>
            <div class="row"><label for="side">部件侧面余量</label><input id="side" value="0.0000"><button type="button" aria-label="锁定"><svg width="12" height="14"><use href="#lock"/></svg></button></div>
            <div class="row"><label for="blank">毛坯余量</label><input id="blank" value="32.0000"></div>
            <div class="row"><label for="chk">检查余量</label><input id="chk" value="0.0000"></div>
            <div class="row"><label for="trim">修剪余量</label><input id="trim" value="0.0000"></div></section>
          <section class="tol"><h2>公差<svg width="10" height="8"><use href="#up"/></svg></h2>
            <div class="row"><label for="tin">内公差</label><input id="tin" value="0.0300"><button type="button" aria-label="锁定"><svg width="12" height="14"><use href="#lock"/></svg></button></div>
            <div class="row pad"><label for="tout">外公差</label><input id="tout" value="0.0300"></div></section>
        </div>
      </div>
      <div class="vs"><i class="vb up"></i><i class="vt"></i><i class="vrest"></i><i class="vb dn"></i></div>
    </div>
    <div class="fold-line"><i class="c-up"></i></div>
    <footer><button type="button" class="ok">确定</button><button type="button">取消</button></footer>
  </form>

  <svg class="marks" width="1434" height="761" aria-hidden="true"><g fill="none" stroke="#ed1c24" stroke-width="2"><rect x="383" y="334" width="265" height="219"/><rect x="870" y="48" width="158" height="80"/><rect x="1203" y="137" width="187" height="105"/><rect x="1173" y="267" width="216" height="74"/><rect x="1197" y="504" width="139" height="59"/></g></svg>

  <!-- network meter and input method bar -->
  <section class="meter"><div class="dial"></div><p><b>0</b>K/s</p><p><b>0.7</b>K/s</p></section>
  <section class="ime"><span class="logo">S</span><b>中</b>
    <svg width="12" height="14" viewBox="0 0 12 14"><circle cx="3" cy="4" r="2" fill="none" stroke="#1f73c9" stroke-width="1.400"/><path d="M8 7h3c1 3-1 5-3 6 1-2 1-3 0-4z" fill="#1f73c9"/></svg>
    <svg width="12" height="16" viewBox="0 0 12 16"><rect x="3" y="0" width="6" height="10" rx="3" fill="#1f73c9"/><path d="M1 7c0 7 10 7 10 0M6 12v3M3 15.500h6" fill="none" stroke="#1f73c9" stroke-width="1.400"/></svg>
    <svg width="16" height="16" viewBox="0 0 16 16"><circle cx="6" cy="4" r="3" fill="#aab3c6"/><path d="M0 13c0-7 12-7 12 0z" fill="#aab3c6"/><rect x="6.500" y="8.500" width="9" height="6" fill="#fff" stroke="#aab3c6"/></svg>
    <svg width="14" height="14" viewBox="0 0 14 14"><path d="M0 0h6v6H0zM0 8h6v6H0zM8 8h6v6H8z" fill="#1f73c9"/><path d="M8.700.700h4.600v4.600H8.700z" fill="none" stroke="#1f73c9" stroke-width="1.400"/></svg></section>

  <section class="wm">
    <svg width="72" height="82" viewBox="0 0 72 82"><g fill-opacity=".8"><path d="M0 21L36 0l16 9C30 14 12 24 0 41z" fill="#c2e8fa"/><path d="M52 9l20 12v42c-4-22-12-36-20-44z" fill="#6cc8f6"/><path d="M72 63L36 82 18 71c24 0 42-8 54-24z" fill="#3aa9ea"/><path d="M18 71L0 61V41c6 0 10 16 18 30z" fill="#5fbdf0"/><path d="M36 21l17 10-17 10-17-9z" fill="#a4dcf8"/><path d="M19 32l17 9v22L19 53z" fill="#7cc8f0"/><path d="M36 41l17-10v22L36 63z" fill="#4db3ec"/></g><path d="M52 9C30 12 12 24 2 42M52 9c10 14 16 30 18 52M70 45C58 62 40 70 18 71M18 71C6 56 4 44 4 30" fill="none" stroke="#f3fafe" stroke-width="2"/></svg>
    <div><strong>3D世界网</strong><em>WWW.3DSJW.COM</em></div>
  </section>
</main>
</body>
</html>
```
FILE: styles.css
```css
* { box-sizing: border-box; }
body { margin: 0; font: 12px/16px "Open Sans", "Noto Sans CJK SC", sans-serif; color: #1e1e1e; background: #fff; overflow: hidden; }
h1, h2, h3, h4, p, ul { margin: 0; padding: 0; font-weight: normal; }
ul { list-style: none; }
a { color: inherit; text-decoration: none; }
i { font-style: normal; }
button, input, select { font: inherit; color: inherit; border-radius: 0; margin: 0; padding: 0; }
svg { display: block; flex: none; }
.defs { position: absolute; width: 0; height: 0; }
.desktop { position: relative; min-height: 100vh; overflow: hidden; }
.desktop > * { position: absolute; }

.caret, .c-up, .c-left { display: block; flex: none; width: 0; height: 0; border: 3px solid transparent; }
.caret { border-width: 4px 3px 0; border-top-color: #111; }
.c-up { border-width: 0 4px 4px; border-bottom-color: #111; }
.c-left { border-width: 4px 5px 4px 0; border-right-color: #333; }

/* spreadsheet */
.sheet { left: 1045px; right: 0; top: 0; bottom: 0; display: flex; flex-direction: column; }
.sheet-top { height: 22px; background: #3d404e; }
.sheet-tabs { height: 39px; background: #e9e9e9; border-bottom: 1px solid #d2d2d2; display: flex; justify-content: flex-end; align-items: center; padding-right: 44px; color: #444; }
.sheet-ribbon { height: 68px; background: #e9e9e9; border-bottom: 1px solid #c4c4c4; display: flex; justify-content: flex-end; padding: 9px 14px 0 0; color: #555; }
.ribbon-item { display: flex; flex-direction: column; gap: 2px; align-items: center; }
.sheet-gap { height: 12px; background: #dcdcdc; }
.sheet-formula { height: 24px; background: #fff; border: 1px solid #bbb; border-width: 1px 0; }
.sheet-head { height: 30px; background: #dcdcdc; border-bottom: 1px solid #aaa; color: #3f5a72; font-size: 14px; line-height: 38px; text-align: right; padding-right: 12px; }
.sheet-grid { flex: 1; background: repeating-linear-gradient(180deg, transparent 0 24px, #d0d0d0 24px 25px), repeating-linear-gradient(90deg, transparent 0 71px, #d0d0d0 71px 72px) 49px 0, #fff; }
.back-window { left: 1045px; top: 300px; width: 93px; height: 449px; background: linear-gradient(180deg, #d0d0d0, #babbbd 130px, #babbbd 437px, #2e8ba6 437px 441px, #f4f4f4 441px); border-right: 1px solid #bbb; }

/* main window */
.nx { left: 0; top: 0; width: 1045px; height: 100%; display: flex; flex-direction: column; background: #fff; }
.nx-cap { height: 7px; }
.menubar, .toolbar, .nx-foot { display: grid; grid-template-columns: 638px 1fr; flex: none; }
.menubar { height: 27px; background: #c9d8d6; font-size: 11px; }
.bar-left, .bar-right { display: flex; align-items: center; }
.menubar .bar-left a { width: 49px; white-space: nowrap; }
.menubar .bar-left svg { margin-right: 6px; }
.menubar .bar-right { padding-left: 4px; }
.toolbar { height: 34px; border-bottom: 1px solid #dedede; }
.tb1 .launch { font-size: 11px; margin: 0 5px 0 4px; }
.tb1 .caret { margin-right: 9px; }
.tb1 .ic { margin-right: 11px; }
.tb1 .sep { margin: 0 8px 0 -4px; }
.sep { width: 1px; height: 26px; background: #ccc; }
.tb1r .caret { margin: 0 6px 0 8px; }
.tb1r .sep { margin: 0 10px 0 0; }
.swatch { width: 24px; height: 24px; background: #c9c9c9; border: 1px solid #333; border-top-width: 3px; }
.toolbar.tall { height: 70px; }
.tb2, .tb2r { align-items: flex-start; padding-top: 6px; font-size: 11px; }
.tool { width: 70px; display: flex; flex-direction: column; align-items: center; gap: 3px; white-space: nowrap; }
.tool.off { color: #b9b9b9; }
.tool.gen { width: 64px; }
.tb2 .tool:first-child { margin-left: -3px; }
.more { width: 50px; height: 56px; display: flex; flex-direction: column; justify-content: space-between; align-items: flex-end; padding-right: 3px; }
.more b { font-size: 16px; line-height: 8px; }
.grip { width: 5px; height: 62px; margin: -4px 5px 0 3px; border-left: 1px solid #ccc; border-right: 2px dotted #aaa; }
.tb2r .tool:first-child { margin-left: -28px; }
.tb2r .tool + .tool { margin-left: -10px; }
.tb2r .tool { width: 76px; }
.tb2r .tool + .tool { margin-left: -12px; }
.selbar { height: 66px; padding-top: 40px; display: flex; align-items: flex-start; gap: 7px; flex: none; border-bottom: 1px solid #888; }
.selbar .drop { height: 20px; width: 140px; font-size: 11px; }
.selbar .drop:first-child { width: 128px; border-left: 0; }
.work { flex: 1; min-height: 0; display: grid; grid-template-columns: 22px 617px 1fr; }
.rail { border-right: 1px solid #aaa; display: flex; flex-direction: column; background: #dcdcdc; }
.rail-a { height: 166px; padding: 6px 0 0; display: flex; flex-direction: column; gap: 17px; border-bottom: 1px solid #aaa; }
.rail-a svg:first-child { margin: 0 0 14px -1px; }
.rail-now { height: 45px; background: #fff; padding-top: 10px; margin-right: -1px; }
.rail-b { border-top: 1px solid #aaa; padding-top: 7px; display: flex; flex-direction: column; gap: 23px; }
.rail-b svg:nth-child(n+2) { margin-top: -7px; }
.rail-b svg:nth-child(n+4) { margin-top: 3px; }
.rail-ar { display: flex; flex-direction: column; gap: 12px; padding-left: 2px; margin-top: -12px; }
.rail-ar .c-up { border-bottom-color: #aaa; }
.caret.bar { box-shadow: 0 -6px 0 -4px #111; }
.navigator { display: flex; flex-direction: column; padding-left: 6px; }
.navigator h2 { height: 29px; line-height: 29px; padding-left: 4px; font-size: 12px; }
.tree { border: 1px solid #d0d0d0; border-width: 1px 0 0 2px; }
.tree-head { height: 21px; background: #f0f0f0; border-bottom: 1px solid #ccc; line-height: 21px; display: flex; padding-left: 6px; }
.tree-head span:first-child { width: 250px; border-right: 1px solid #bbb; }
.tree ul { background: linear-gradient(#000, #000) 255px 0/1px 100% no-repeat; }
.tree li { height: 20px; padding: 0 0 0 9px; border-bottom: 1px solid #e6e6e6; display: flex; align-items: center; }
.tree li:nth-child(even) { background: rgba(0,0,0,.02); }
.tree li:last-child { height: 17px; border: 0; }
.tree li.root { padding-left: 3px; }
.vis { color: #6a2fc8; }
.g { align-self: stretch; width: 19px; border-left: 1px dotted #999; }
.g.h { width: 10px; margin-right: 3px; background: linear-gradient(90deg, #999 50%, transparent 50%) 0 10px/2px 1px repeat-x; }
.g.h.first { margin-right: 1px; }
.g.last { align-self: flex-start; height: 11px; }
.ex { margin-right: 4px; }
.fi { margin-right: 3px; }
.fold { width: 9px; height: 9px; border: 1px solid #bbb; margin: 0 8px 0 -4px; background: linear-gradient(#333, #333) 1px 3px/5px 1px no-repeat #fff; }
.picked { flex: 1; font-weight: normal; background: #3399ff; color: #fff; line-height: 19px; padding-left: 3px; margin-left: -3px; }
.hscroll { height: 17px; background: #f0f0f0; display: flex; align-items: center; padding-left: 5px; gap: 8px; }
.hthumb { flex: 1; height: 15px; border: 1px solid #888; background: linear-gradient(#f0f0f0, #cfd0d2); font-size: 9px; line-height: 12px; padding-left: 226px; color: #555; }
.splitter { height: 5px; background: #d5d5d5; border: 1px solid #aaa; border-width: 1px 0; }
.navigator h3 { height: 24px; line-height: 25px; font-size: 14px; color: #2b85b5; padding-left: 7px; border-bottom: 2px solid #ccc; }
.scene { border: 1px solid #f39a3c; background: linear-gradient(#b4b5b8, #e9eaec 75%, #e3e4e6); overflow: hidden; min-height: 0; }
.model { width: 100%; height: 100%; }
.axis { font: 15px "Open Sans", sans-serif; }
.axis.small { font-size: 12px; }
.cone { width: 100%; height: 100%; border-radius: 50%; background: conic-gradient(from 0deg at 45% 41%, #d8b270, #e2c07d 50deg, #f2dc9c 80deg, #fff2b4 98deg, #f2da98 112deg, #d7b070 130deg, #b88f5c 160deg, #ab8455 205deg, #ac8656 235deg, #c69d65 280deg, #d3ac6d 320deg, #d8b270); -webkit-mask: radial-gradient(closest-side, #000 86%, transparent); mask: radial-gradient(closest-side, #000 86%, transparent); }
.nx-foot { height: 12px; border-top: 1px solid #ddd; }
.nx-foot .bar-left, .nx-foot .bar-right { align-items: flex-start; }
.nx-foot .bar-left { padding-left: 12px; }

/* form parts */
.drop { position: relative; display: flex; align-items: center; background: #fff; border: 1px solid #a9a9a9; }
.drop select { appearance: none; border: 0; background: none; width: 100%; height: 100%; padding: 0 14px 0 4px; line-height: normal; }
.drop::after { content: ""; position: absolute; right: 4px; top: calc(50% - 2px); border: 3px solid transparent; border-width: 4px 3px 0; border-top-color: #111; pointer-events: none; }
.drop.off { color: #aaa; border-color: #aaa; }
.drop.off::after { border-width: 4px 4px 0; border-top-color: #aaa; }
input:not([type=checkbox]) { border: 1px solid #a9a9a9; background: #fff; text-align: right; font-family: "Liberation Mono", monospace; color: #484848; }
.row { display: flex; align-items: center; }
.row > :first-child { flex: 1; white-space: nowrap; width: 0; }

/* windows */
.win { background: #e8e8e8; border: 1px solid #bdbdbd; border-width: 0 1px 1px; box-shadow: 0 0 5px rgba(0,0,0,.45); }
.win header { display: flex; align-items: center; background: #5d8881; color: #fff; margin: 0 -1px; }
.win header h1 { flex: 1; }
.win header button { border: 0; background: none; color: #fff; }
.win h2, .win h4 { display: flex; justify-content: space-between; align-items: center; color: #2b85b5; }

.vs { display: flex; flex-direction: column; background: #f0f0f0; }
.vb { flex: none; height: 13px; border: 1px solid #aaa; background: linear-gradient(90deg, #f4f4f4, #cfcfcf); display: flex; align-items: center; justify-content: center; }
.vb::after { content: ""; border: 3px solid transparent; border-width: 0 3px 3px; border-bottom-color: #444; }
.vb.dn::after { border-width: 3px 3px 0; border-top-color: #444; }
.vt { margin-top: 1px; border: 1px solid #999; background: linear-gradient(90deg, #f4f4f4, #c3c4c8); display: flex; align-items: center; justify-content: center; }
.vt::after { content: ""; width: 6px; height: 7px; background: repeating-linear-gradient(#555 0 1px, transparent 1px 3px); }
.vt.blue { border-color: #3f7fb0; background: linear-gradient(90deg, #e2f4fd 0 30%, #a4daf5 45%, #b9e4fa); }
.vt.blue::after { background: repeating-linear-gradient(#2f6f9c 0 1px, transparent 1px 3px); }
.vrest { flex: 1; }

/* operation */
.op { left: 293px; top: 10px; width: 345px; bottom: 0; border-bottom: 0; }
.op header { height: 24px; padding: 0 9px; }
.op h1 { font-size: 13px; padding-left: 9px; }
.op-body { display: flex; padding: 4px 6px 0 5px; height: calc(100% - 24px); overflow: hidden; }
.op-list { flex: 1; }
.op-list section { background: #fff; border-bottom: 2px solid #c9c9c9; margin-bottom: 3px; padding: 0 9px 5px; }
.op-list section.shut { padding-bottom: 0; }
.op-list h2 { font-size: 14px; line-height: 26px; height: 30px; align-items: flex-start; margin: 0 -4px 0 -2px; }
.op-list h2 svg { margin-top: 8px; }
.op-list .shut h2 { height: 22px; line-height: 25px; }
.op .row { gap: 2px; margin-bottom: 2px; }
.op .row > button { width: 32px; height: 32px; border: 1px solid #a9a9a9; background: #fff; display: flex; align-items: center; justify-content: center; }
.op .row > button:disabled { border-color: #ccc; }
.op .row > button:disabled svg { opacity: .4; filter: grayscale(.7); }
.op .row.b { align-items: flex-start; height: 32px; }
.op .row.b > :first-child { line-height: 36px; }
.op .path .row.b > :first-child { line-height: 31px; }
.op .row.b > label:first-child, .op .path .row.b > label:first-child { line-height: 25px; }
.op .drop { height: 25px; }
.op .drop::after { right: 7px; border-width: 4px 4px 0; }
.op .tallsel .drop { height: 26px; }
.op input { width: 90px; height: 26px; font-size: 16px; padding-right: 4px; }
.w127 { width: 127px; } .w152 { width: 152px; } .w67 { width: 67px; }
.pic svg { margin-left: 4px; }
.op .vs { width: 16px; margin-top: 1px; }
.op .vb { height: 16px; }
.op .vt { height: 689px; }

/* cutting parameters */
.cut { font-size: var(--f); line-height: 14px; }
.cut header { padding: 0 6px; }
.cut h1 { font-size: var(--h1); padding-left: 9px; }
.cut-body { display: flex; gap: 4px; }
.cut-main { flex: 1; min-width: 0; display: flex; flex-direction: column; }
.cut nav { display: flex; align-items: flex-end; height: var(--tabs); margin-bottom: -1px; position: relative; }
.cut nav button { width: var(--tab); height: calc(var(--tabs) - 3px); border: 1px solid #d2d2d2; border-left-color: #f4f4f4; border-bottom: 0; background: #e8e8e8; white-space: nowrap; margin-bottom: 1px; }
.cut nav button.wide { width: var(--tabw); }
.cut nav button.on { width: var(--tabon); height: var(--tabs); margin: 0; background: #fff; color: #2b85b5; border-color: #c4c4c4; }
.panel { height: var(--panel); overflow: hidden; background: #fff; border: 1px solid #c4c4c4; border-width: 1px 1px 0; padding: 0 3px; }
.panel section { border-bottom: 1px solid #c4c4c4; padding: 0 6px var(--pb); display: flex; flex-direction: column; gap: var(--gap); }
.cut h2 { font-size: var(--h2); height: calc(var(--title) - var(--gap)); margin: 0 -2px; }
.cut .row { height: var(--r); gap: 1px; }
.cut .drop { height: calc(var(--r) - 1px); }
.cut .drop.lg { width: var(--lg); }
.cut .drop.sm { width: var(--sm); }
.cut .row input { width: var(--in); height: var(--r); font-size: var(--num); padding-right: 3px; }
.cut .row button { width: 18px; height: 18px; margin-left: 1px; background: #fff; border: 1px solid #bbb; display: flex; align-items: center; justify-content: center; }
.check { display: flex; align-items: center; gap: 4px; white-space: nowrap; height: var(--ck); }
.check input { appearance: none; width: 12px; height: 12px; border: 1px solid #999; background: #f2f2f2; display: flex; justify-content: center; }
.check input:checked::after { content: ""; width: 4px; height: 7px; border: solid #2c4d99; border-width: 0 2px 2px 0; transform: rotate(40deg); }
.fold-line { height: 11px; border-bottom: 1px solid #d6d6d6; display: flex; justify-content: center; align-items: center; margin: 0 4px; }
.cut footer { display: flex; justify-content: flex-end; gap: 3px; padding-top: 7px; }
.cut footer button { width: var(--bw); height: var(--bh); background: #c9cacf; border: 1px solid #bbb; }
.cut footer button.ok { background: #99cae4; border-color: #51a8d8; }

.d2 { --f: 9px; --h1: 10px; --h2: 11px; --tabs: 23px; --tab: 39px; --tabw: 49px; --tabon: 43px; --panel: 211px; --title: 25px; --gap: 1px; --r: 20px; --pb: 5px; --lg: 117px; --sm: 52px; --in: 69px; --num: 13px; --bw: 42px; --bh: 20px;
  left: 744px; top: -4px; width: 303px; height: 303px; }
.d2 header { height: 19px; }
.d2 .cut-body { padding: 6px 3px 0 8px; }
.d2 .vs { width: 12px; margin-top: -2px; }
.d2 .vt { height: 156px; }
.d2 footer { padding-right: 10px; }

.d3 { --f: 11px; --h1: 12px; --h2: 13px; --tabs: 27px; --tab: 47px; --tabw: 57px; --tabon: 50px; --panel: 249px; --title: 29px; --gap: 1px; --r: 23px; --pb: 5px; --lg: 137px; --sm: 60px; --in: 81px; --num: 15px; --bw: 49px; --bh: 23px; --ck: 23px;
  left: 1049px; top: 66px; width: 357px; height: 356px; }
.d3 header { height: 22px; padding: 0 8px; }
.d3 h1 { padding-left: 7px; }
.d3 .cut-body { padding: 7px 6px 0 8px; }
.d3 .panel section { padding: 0 9px var(--pb); }
.d3 .panel section:first-child { padding-bottom: 9px; }
.d3 .vs { width: 14px; margin: -3px 0 2px; }
.d3 .vt { height: 185px; }
.d3 h4 { height: 21px; background: #f0f5f5; border: 1px solid #ddd; padding: 0 5px 0 7px; }
.d3 footer { padding-right: 13px; gap: 4px; }

.d4 { --f: 9px; --h1: 10px; --h2: 11px; --tabs: 23px; --tab: 40px; --tabw: 50px; --tabon: 43px; --panel: 215px; --title: 26px; --gap: 2px; --r: 20px; --pb: 5px; --in: 70px; --num: 13px; --bw: 43px; --bh: 20px; --ck: 17px;
  left: 1037px; top: 430px; width: 309px; height: 308px; }
.d4 header { height: 19px; }
.d4 h1 { padding-left: 7px; }
.d4 .cut-body { padding: 6px 4px 0 8px; }
.d4 .panel section { padding: 0 9px var(--pb) 7px; }
.d4 .panel section.tol { margin-top: 4px; border-top: 1px solid #d4d4d4; gap: 0; }
.d4 .pad { padding-right: 20px; }
.d4 .check input { width: 11px; height: 11px; }
.d4 .vs { width: 12px; margin-top: -3px; }
.d4 .vt { height: 160px; }
.d4 footer { padding-right: 11px; }

.marks { left: 0; top: 0; pointer-events: none; }

/* floating bars */
.meter { left: 1276px; top: 0; width: 88px; height: 40px; background: #22252f; border-radius: 0 0 18px 0; color: #aaa; text-align: right; padding-right: 7px; font-size: 10px; line-height: 17px; }
.meter b { color: #fff; font-size: 11px; margin-right: 2px; }
.meter p + p { padding-top: 5px; }
.dial { position: absolute; left: -28px; top: -6px; width: 56px; height: 56px; border-radius: 50%; background: radial-gradient(circle, #3c4254 0 21px, transparent 22px), conic-gradient(#4ac8c0, #9c6 90deg, #cd5 170deg, #ec4 230deg, #e55 290deg, #4ac8c0); border: 4px solid #4a4e5c; }
.ime { left: 1206px; top: 9px; width: 126px; height: 22px; background: #fff; display: flex; align-items: center; justify-content: space-between; padding: 0 5px 0 0; }
.ime b { color: #1f73c9; font-size: 15px; }
.ime .logo { width: 26px; height: 24px; margin: -3px 0 0 -13px; background: #f0562a; border-radius: 3px; color: #fff; font: bold 24px/24px "Liberation Sans", sans-serif; text-align: center; transform: rotate(-10deg); }
.wm { left: 1151px; top: 666px; display: flex; gap: 8px; }
.wm div { display: flex; flex-direction: column; color: rgba(255,255,255,.55); padding-top: 14px; gap: 3px; white-space: nowrap; }
.wm strong { font: bold 37px/36px "Noto Sans CJK SC", sans-serif; }
.wm em { font: 16px/16px "DejaVu Sans", sans-serif; }
```
